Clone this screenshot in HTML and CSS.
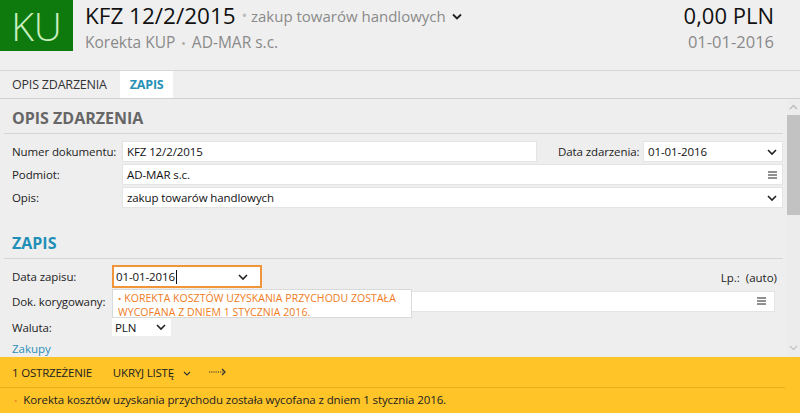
FILE: index.html
```html
<!DOCTYPE html>
<html lang="pl">
<head>
<meta charset="utf-8">
<link rel="stylesheet" href="styles.css">
</head>
<body>
<div class="app">
  <header class="header">
    <div class="logo">KU</div>
    <div class="titles">
      <div class="title-line">
        <span class="doc-no">KFZ 12/2/2015</span>
        <span class="dot">•</span>
        <span class="doc-desc">zakup towarów handlowych</span>
        <svg class="chev-dark" width="10" height="7" viewBox="0 0 10 7"><polyline points="1,1.5 5,5.5 9,1.5" fill="none" stroke="#222" stroke-width="1.8"/></svg>
      </div>
      <div class="sub-line">Korekta KUP <span class="dot-s">•</span> AD-MAR s.c.</div>
    </div>
    <div class="amount">
      <div class="sum">0,00 PLN</div>
      <div class="date">01-01-2016</div>
    </div>
  </header>

  <nav class="tabs">
    <div class="tab">OPIS ZDARZENIA</div>
    <div class="tab active">ZAPIS</div>
  </nav>

  <div class="main">
    <div class="content">
      <h2 class="sec-title">OPIS ZDARZENIA</h2>
      <div class="rows">
        <div class="row">
          <label class="lbl">Numer dokumentu:</label>
          <div class="field w-num">KFZ 12/2/2015</div>
          <label class="lbl-mid">Data zdarzenia:</label>
          <div class="field w-date">01-01-2016<svg class="ico" width="10" height="7" viewBox="0 0 10 7"><polyline points="1,1.5 5,5.5 9,1.5" fill="none" stroke="#222" stroke-width="1.6"/></svg></div>
        </div>
        <div class="row">
          <label class="lbl">Podmiot:</label>
          <div class="field grow">AD-MAR s.c.<svg class="ico" width="9" height="8" viewBox="0 0 9 8"><path d="M0 1h9M0 4h9M0 7h9" stroke="#222" stroke-width="1"/></svg></div>
        </div>
        <div class="row">
          <label class="lbl">Opis:</label>
          <div class="field grow">zakup towarów handlowych<svg class="ico" width="10" height="7" viewBox="0 0 10 7"><polyline points="1,1.5 5,5.5 9,1.5" fill="none" stroke="#222" stroke-width="1.6"/></svg></div>
        </div>
      </div>

      <h2 class="sec-title teal">ZAPIS</h2>
      <div class="zrows">
        <div class="zrow r1">
          <label class="zlbl">Data zapisu:</label>
          <div class="field focus">01-01-2016<span class="caret"></span><svg class="ico" width="10" height="7" viewBox="0 0 10 7"><polyline points="1,1.5 5,5.5 9,1.5" fill="none" stroke="#222" stroke-width="1.6"/></svg></div>
          <div class="lp">Lp.:&nbsp; (auto)</div>
          <div class="tooltip"><span class="bullet">•</span> KOREKTA KOSZTÓW UZYSKANIA PRZYCHODU ZOSTAŁA<br>WYCOFANA Z DNIEM 1 STYCZNIA 2016.</div>
        </div>
        <div class="zrow r2">
          <label class="zlbl">Dok. korygowany:</label>
          <div class="field grow"><svg class="ico" width="9" height="8" viewBox="0 0 9 8"><path d="M0 1h9M0 4h9M0 7h9" stroke="#222" stroke-width="1"/></svg></div>
        </div>
        <div class="zrow r3">
          <label class="zlbl">Waluta:</label>
          <div class="field cur">PLN<svg class="ico" width="10" height="7" viewBox="0 0 10 7"><polyline points="1,1.5 5,5.5 9,1.5" fill="none" stroke="#222" stroke-width="1.6"/></svg></div>
        </div>
        <a class="link">Zakupy</a>
      </div>
    </div>
    <div class="scrollbar">
      <svg class="sb-up" width="9" height="6" viewBox="0 0 9 6"><polyline points="1,5 4.5,1.5 8,5" fill="none" stroke="#bdbdbd" stroke-width="1.4"/></svg>
      <div class="thumb"></div>
      <svg class="sb-down" width="9" height="6" viewBox="0 0 9 6"><polyline points="1,1 4.5,4.5 8,1" fill="none" stroke="#c6c6c6" stroke-width="1.4"/></svg>
    </div>
  </div>

  <footer class="warn">
    <div class="warn-top">
      <span>1 OSTRZEŻENIE</span>
      <span class="hide">UKRYJ LISTĘ <svg width="8" height="5" viewBox="0 0 8 5"><polyline points="1,1 4,4 7,1" fill="none" stroke="#333" stroke-width="1.1"/></svg></span>
      <svg class="arrow" width="18" height="8" viewBox="0 0 18 8"><path d="M0 4h14" stroke="#333" stroke-width="1.2" stroke-dasharray="1.2 1"/><polyline points="13,1 16,4 13,7" fill="none" stroke="#333" stroke-width="1.3"/></svg>
    </div>
    <div class="warn-msg"><span class="wbullet">•</span> Korekta kosztów uzyskania przychodu została wycofana z dniem 1 stycznia 2016.</div>
  </footer>
</div>
</body>
</html>
```

FILE: styles.css
```css
* { box-sizing: border-box; }
html, body { margin: 0; padding: 0; }
body {
  font-family: "Open Sans", "Noto Sans", sans-serif;
  background: #eeeeee;
  color: #222;
  width: 800px;
  height: 413px;
  overflow: hidden;
}
.app { display: flex; flex-direction: column; height: 413px; }

/* header */
.header {
  height: 71px;
  display: flex;
  align-items: flex-start;
  background: #efefef;
  border-bottom: 1px solid #d6d6d6;
}
.logo {
  width: 73px;
  height: 51px;
  background: #0e7a0d;
  color: #c9efc0;
  font-size: 39px;
  line-height: 51px;
  font-weight: 300;
  text-align: center;
  flex: none;
}
.titles { flex: 1; padding-left: 12px; }
.title-line { display: flex; align-items: center; height: 31px; }
.doc-no { font-size: 22.5px; color: #111; }
.dot { color: #bbb; font-size: 14px; margin: 0 4px 0 6px; }
.doc-desc { font-size: 15px; color: #8a8a8a; }
.chev-dark { margin-left: 6px; margin-top: 1px; }
.sub-line { font-size: 15.5px; color: #8a8a8a; line-height: 22px; }
.dot-s { color: #aaa; margin: 0 2px; font-size: 12px; }
.amount { text-align: right; padding-right: 26px; }
.sum { font-size: 22px; color: #111; height: 31px; line-height: 31px; }
.date { font-size: 16.5px; color: #8a8a8a; line-height: 22px; }

/* tabs */
.tabs {
  height: 28px;
  display: flex;
  padding-left: 4px;
  background: #efefef;
  border-bottom: 1px solid #d0d0d0;
}
.tab {
  font-size: 12.5px;
  color: #333;
  line-height: 27px;
  padding: 0 8px;
  letter-spacing: -0.2px;
}
.tab.active {
  background: #fff;
  color: #2791b6;
  font-weight: 700;
  margin-left: 5px;
  padding: 0 9px 0 10px;
}

/* main */
.main { flex: 1; display: flex; background: #eeeeee; min-height: 0; }
.content { flex: 1; padding: 9px 4px 0 4px; }
.sec-title {
  margin: 0;
  font-size: 16px;
  font-weight: 700;
  color: #666;
  padding: 0 0 5px 8px;
  line-height: 20px;
  border-bottom: 1px solid #d6d6d6;
}
.sec-title.teal { color: #1f8fb7; margin-top: 25px; }

.rows { display: flex; flex-direction: column; gap: 2px; padding: 7px 0 0 8px; }
.row { display: flex; align-items: center; height: 21px; }
.lbl { width: 110px; font-size: 11.5px; color: #222; letter-spacing: -0.1px; }
.lbl-mid { width: 106px; padding-left: 21px; font-size: 11.5px; color: #222; letter-spacing: -0.1px; }
.field {
  height: 21px;
  background: #fff;
  border: 1px solid #e4e4e4;
  display: flex;
  align-items: center;
  padding-left: 4px;
  font-size: 11.5px;
  color: #111;
  position: relative;
  letter-spacing: -0.1px;
}
.field .ico { position: absolute; right: 5px; top: 50%; transform: translateY(-50%); }
.w-num { width: 415px; }
.w-date { flex: 1; }
.grow { flex: 1; }

.zrows { padding: 6px 0 0 8px; display: flex; flex-direction: column; }
.zrow { display: flex; align-items: center; position: relative; }
.zlbl { width: 100px; font-size: 11.5px; color: #222; letter-spacing: -0.1px; }
.r1 { height: 23px; }
.field.focus {
  width: 150px;
  height: 23px;
  border: 2px solid #f1953a;
  padding-left: 2px;
}
.field.focus .ico { right: 12px; }
.caret { display: inline-block; width: 1px; height: 14px; background: #111; margin-left: 1px; }
.lp { margin-left: auto; font-size: 11.5px; color: #222; padding-right: 6px; margin-top: 2px; }
.r2 { height: 22px; margin-top: 2px; padding-right: 8px; }
.r2 .ico { right: 8px; }
.r3 { height: 18px; margin-top: 6px; }
.field.cur { width: 59px; height: 18px; border: none; padding-left: 3px; }
.field.cur .ico { right: 5px; }
.link { font-size: 11.5px; color: #2a8fba; margin-top: 5px; line-height: 16px; }

.tooltip {
  position: absolute;
  left: 100px;
  top: 24px;
  width: 300px;
  height: 29px;
  background: #fff;
  border: 1px solid #d9d9d9;
  color: #f07b22;
  font-size: 10.5px;
  line-height: 13.5px;
  padding: 2px 0 0 5px;
  letter-spacing: 0.05px;
  z-index: 2;
}
.bullet { font-size: 9px; }

/* scrollbar */
.scrollbar {
  width: 13px;
  position: relative;
  background: #ececec;
  display: flex;
  flex-direction: column;
  align-items: center;
}
.sb-up { margin-top: 5px; }
.thumb { width: 13px; height: 100px; background: #c2c2c2; margin-top: 5px; }
.sb-down { margin-top: auto; margin-bottom: 6px; }

/* warning bar */
.warn { height: 56px; background: #fec428; }
.warn-top {
  height: 31px;
  display: flex;
  align-items: center;
  padding-left: 12px;
  font-size: 11.5px;
  color: #222;
  border-bottom: 1px solid #e9ae16;
  margin-right: 15px;
  letter-spacing: -0.2px;
}
.hide { margin-left: 21px; }
.hide svg { margin-left: 6px; vertical-align: middle; }
.arrow { margin-left: 18px; }
.warn-msg {
  font-size: 11.5px;
  color: #222;
  line-height: 24px;
  padding-left: 14px;
  letter-spacing: -0.1px;
}
.wbullet { color: #f08a2a; font-size: 9px; margin-right: 3px; }
```
